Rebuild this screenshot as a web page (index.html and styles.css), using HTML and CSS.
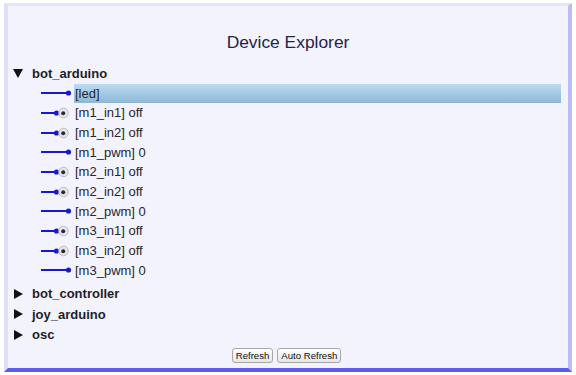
FILE: index.html
```html
<!DOCTYPE html>
<html>
<head>
<meta charset="utf-8">
<link rel="stylesheet" href="styles.css">
</head>
<body>
<div class="window">
  <h1 class="title">Device Explorer</h1>
  <ul class="tree">
    <li class="node open">
      <div class="node-head"><svg class="tri" viewBox="0 0 10 10"><polygon points="0,1 10,1 5,10"/></svg><span>bot_arduino</span></div>
      <ul class="children">
        <li class="leaf selected"><svg class="ico" viewBox="0 0 32 12"><line x1="0" y1="6" x2="27" y2="6"/><circle class="dot" cx="27.5" cy="6" r="2.6"/></svg><span class="label">[led]</span></li>
        <li class="leaf"><svg class="ico" viewBox="0 0 32 12"><line x1="0" y1="6" x2="15" y2="6"/><circle class="dot" cx="15.5" cy="6" r="2.6"/><circle class="radio" cx="22.5" cy="6" r="4.8"/><circle class="pin" cx="22.2" cy="6.2" r="2"/></svg><span class="label">[m1_in1] off</span></li>
        <li class="leaf"><svg class="ico" viewBox="0 0 32 12"><line x1="0" y1="6" x2="15" y2="6"/><circle class="dot" cx="15.5" cy="6" r="2.6"/><circle class="radio" cx="22.5" cy="6" r="4.8"/><circle class="pin" cx="22.2" cy="6.2" r="2"/></svg><span class="label">[m1_in2] off</span></li>
        <li class="leaf"><svg class="ico" viewBox="0 0 32 12"><line x1="0" y1="6" x2="27" y2="6"/><circle class="dot" cx="27.5" cy="6" r="2.6"/></svg><span class="label">[m1_pwm] 0</span></li>
        <li class="leaf"><svg class="ico" viewBox="0 0 32 12"><line x1="0" y1="6" x2="15" y2="6"/><circle class="dot" cx="15.5" cy="6" r="2.6"/><circle class="radio" cx="22.5" cy="6" r="4.8"/><circle class="pin" cx="22.2" cy="6.2" r="2"/></svg><span class="label">[m2_in1] off</span></li>
        <li class="leaf"><svg class="ico" viewBox="0 0 32 12"><line x1="0" y1="6" x2="15" y2="6"/><circle class="dot" cx="15.5" cy="6" r="2.6"/><circle class="radio" cx="22.5" cy="6" r="4.8"/><circle class="pin" cx="22.2" cy="6.2" r="2"/></svg><span class="label">[m2_in2] off</span></li>
        <li class="leaf"><svg class="ico" viewBox="0 0 32 12"><line x1="0" y1="6" x2="27" y2="6"/><circle class="dot" cx="27.5" cy="6" r="2.6"/></svg><span class="label">[m2_pwm] 0</span></li>
        <li class="leaf"><svg class="ico" viewBox="0 0 32 12"><line x1="0" y1="6" x2="15" y2="6"/><circle class="dot" cx="15.5" cy="6" r="2.6"/><circle class="radio" cx="22.5" cy="6" r="4.8"/><circle class="pin" cx="22.2" cy="6.2" r="2"/></svg><span class="label">[m3_in1] off</span></li>
        <li class="leaf"><svg class="ico" viewBox="0 0 32 12"><line x1="0" y1="6" x2="15" y2="6"/><circle class="dot" cx="15.5" cy="6" r="2.6"/><circle class="radio" cx="22.5" cy="6" r="4.8"/><circle class="pin" cx="22.2" cy="6.2" r="2"/></svg><span class="label">[m3_in2] off</span></li>
        <li class="leaf"><svg class="ico" viewBox="0 0 32 12"><line x1="0" y1="6" x2="27" y2="6"/><circle class="dot" cx="27.5" cy="6" r="2.6"/></svg><span class="label">[m3_pwm] 0</span></li>
      </ul>
    </li>
    <li class="node"><div class="node-head"><svg class="tri" viewBox="0 0 10 10"><polygon points="1,0 10,5 1,10"/></svg><span>bot_controller</span></div></li>
    <li class="node"><div class="node-head"><svg class="tri" viewBox="0 0 10 10"><polygon points="1,0 10,5 1,10"/></svg><span>joy_arduino</span></div></li>
    <li class="node"><div class="node-head"><svg class="tri" viewBox="0 0 10 10"><polygon points="1,0 10,5 1,10"/></svg><span>osc</span></div></li>
  </ul>
  <div class="actions">
    <button class="btn">Refresh</button>
    <button class="btn">Auto Refresh</button>
  </div>
</div>
</body>
</html>
```
FILE: styles.css
```css
html, body {
  margin: 0;
  padding: 0;
  background: #ffffff;
}
body {
  padding: 3px 4px 3px 4px;
  font-family: "Liberation Sans", Arial, sans-serif;
}
.window {
  box-sizing: border-box;
  height: 369px;
  background: #f3f3fd;
  border-style: solid;
  border-width: 3px 4px 4px 4px;
  border-color: #e3e3f9 #bcbcf3 #5c5ce8 #dfdff8;
  display: flex;
  flex-direction: column;
}
.title {
  margin: 0;
  padding-top: 26px;
  height: 31px;
  font-size: 17.4px;
  font-weight: normal;
  text-align: center;
  color: #24244a;
  line-height: 20px;
}
.tree {
  list-style: none;
  margin: 0;
  padding: 0;
  flex: 1;
}
.node-head {
  display: flex;
  align-items: center;
  height: 20.5px;
  font-weight: bold;
  font-size: 13px;
  color: #1e1e2a;
}
.tri {
  width: 10px;
  height: 10px;
  margin-left: 5px;
  margin-right: 9px;
  fill: #111;
}
.children {
  list-style: none;
  margin: 0 0 3.5px 0;
  padding: 0;
}
.leaf {
  display: flex;
  align-items: center;
  height: 19.67px;
  font-size: 13px;
  color: #26262e;
  margin-right: 7px;
}
.ico {
  width: 32px;
  height: 12px;
  margin-left: 33px;
  margin-right: 1px;
  flex: none;
}
.ico line {
  stroke: #1818d0;
  stroke-width: 2;
}
.ico .dot {
  fill: #1818d0;
}
.ico .radio {
  fill: #e6e6ea;
  stroke: #b0b0b8;
  stroke-width: 0.8;
}
.ico .pin {
  fill: #2a2a2a;
}
.label {
  flex: 1;
  padding-left: 1px;
  align-self: stretch;
  display: flex;
  align-items: center;
}
.selected .label {
  background: linear-gradient(#bcdcf0, #8db6d6);
  margin-top: 0.5px;
}
.actions {
  display: flex;
  justify-content: center;
  gap: 4px;
  padding-bottom: 5px;
  padding-right: 3px;
}
.btn {
  font-family: "Liberation Sans", Arial, sans-serif;
  font-size: 9.6px;
  color: #111;
  height: 15px;
  padding: 0 3px;
  line-height: 13px;
  border: 1px solid #a8a8a8;
  border-radius: 3px;
  background: linear-gradient(#ffffff, #e6e6e6);
}
```
